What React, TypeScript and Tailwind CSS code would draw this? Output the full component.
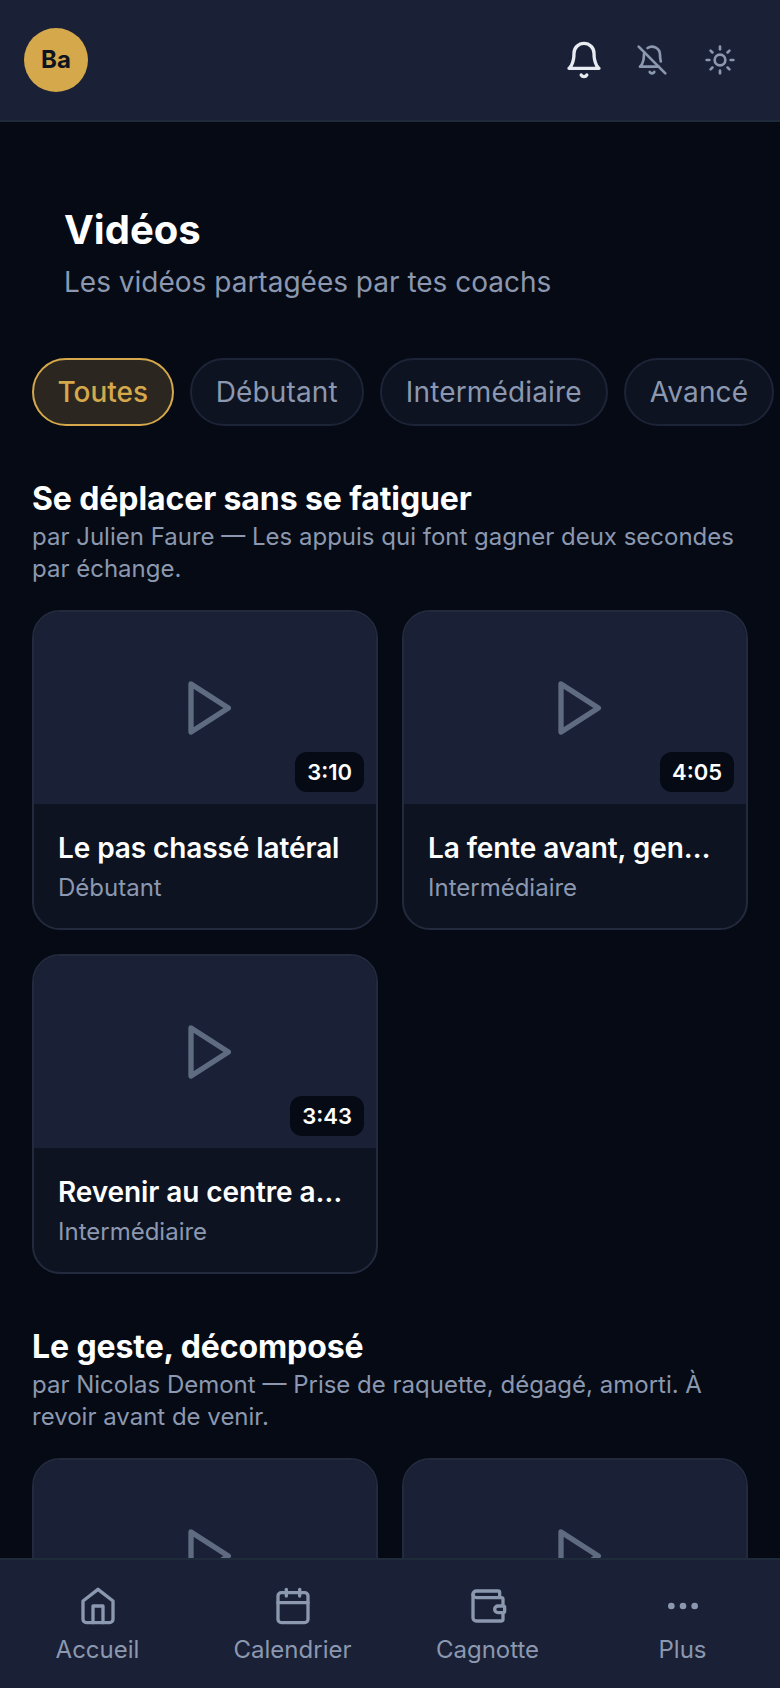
import { Calendar, Ellipsis, Sun, Wallet } from 'lucide-react';

const filters = ['Toutes', 'Débutant', 'Intermédiaire', 'Avancé'];

const sections = [
  {
    title: 'Se déplacer sans se fatiguer',
    text: 'par Julien Faure — Les appuis qui font gagner deux secondes par échange.',
    videos: [
      { title: 'Le pas chassé latéral', level: 'Débutant', time: '3:10' },
      { title: 'La fente avant, genou protégé', level: 'Intermédiaire', time: '4:05' },
      { title: 'Revenir au centre après le coup', level: 'Intermédiaire', time: '3:43' },
    ],
  },
  {
    title: 'Le geste, décomposé',
    text: 'par Nicolas Demont — Prise de raquette, dégagé, amorti. À revoir avant de venir.',
    videos: [
      { title: 'La prise de raquette', level: 'Débutant', time: '2:48' },
      { title: 'Le dégagé de fond de court', level: 'Intermédiaire', time: '5:12' },
    ],
  },
];

function HouseIcon({ size, className }: { size: number; className?: string }) {
  return (
    <svg width={size} height={size} viewBox="0 0 24 24" fill="none" stroke="currentColor" strokeWidth="2" strokeLinecap="round" strokeLinejoin="round" className={className}>
      <path d="m3 9 9-7 9 7v11a2 2 0 0 1-2 2H5a2 2 0 0 1-2-2z" />
      <polyline points="9 22 9 12 15 12 15 22" />
    </svg>
  );
}

function BellIcon({ size, className }: { size: number; className?: string }) {
  return (
    <svg width={size} height={size} viewBox="0 0 24 24" fill="none" stroke="currentColor" strokeWidth="2" strokeLinecap="round" strokeLinejoin="round" className={className}>
      <path d="M6 8a6 6 0 0 1 12 0c0 7 3 9 3 9H3s3-2 3-9" />
      <path d="M10.3 21a1.94 1.94 0 0 0 3.4 0" />
    </svg>
  );
}

function BellOffIcon({ size, className }: { size: number; className?: string }) {
  return (
    <svg width={size} height={size} viewBox="0 0 24 24" fill="none" stroke="currentColor" strokeWidth="2" strokeLinecap="round" strokeLinejoin="round" className={className}>
      <path d="M8.7 3A6 6 0 0 1 18 8a21.3 21.3 0 0 0 .6 5" />
      <path d="M17 17H3s3-2 3-9a4.67 4.67 0 0 1 .3-1.7" />
      <path d="M10.3 21a1.94 1.94 0 0 0 3.4 0" />
      <path d="m2 2 20 20" />
    </svg>
  );
}

const navItems = [
  { label: 'Accueil', icon: HouseIcon },
  { label: 'Calendrier', icon: Calendar },
  { label: 'Cagnotte', icon: Wallet },
  { label: 'Plus', icon: Ellipsis },
];

function VideoCard({ title, level, time }: { title: string; level: string; time: string }) {
  return (
    <div className="overflow-hidden rounded-[28px] border-2 border-[#232a3e] bg-[#0d1320]">
      <div className="relative flex h-[192px] items-center justify-center bg-[#1a2035]">
        <svg width="64" height="64" viewBox="0 0 24 24" fill="none" stroke="#5f6b80" strokeWidth="2" strokeLinejoin="round" className="ml-[4px]">
          <polygon points="6 3 20 12 6 21 6 3" />
        </svg>
        <span className="absolute right-[12px] bottom-[12px] rounded-[12px] bg-[#050a14] px-[12px] py-[4px] text-[22px] leading-[32px] font-semibold text-white">
          {time}
        </span>
      </div>
      <div className="px-[24px] pt-[24px] pb-[24px]">
        <p className="truncate text-[28px] leading-[40px] font-semibold tracking-[-0.1px] text-white">{title}</p>
        <p className="mt-[4px] text-[24px] leading-[32px] text-[#8b98b0]">{level}</p>
      </div>
    </div>
  );
}

export default function App() {
  return (
    <div className="flex h-[1688px] w-[780px] flex-col overflow-hidden bg-[#050a14] font-['Inter',sans-serif]">
      <header className="flex h-[122px] shrink-0 items-center justify-between border-b-2 border-[#1f2a3a] bg-[#1a2035] pr-[26px] pl-[24px]">
        <div className="flex h-[64px] w-[64px] items-center justify-center rounded-full bg-[#d4a84b] text-[24px] font-bold text-[#0d1320]">
          Ba
        </div>
        <div className="flex items-center">
          <span className="flex w-[68px] justify-center text-[#e8ecf2]">
            <BellIcon size={40} />
          </span>
          <span className="flex w-[68px] justify-center text-[#8b98b0]">
            <BellOffIcon size={32} />
          </span>
          <span className="flex w-[68px] justify-center text-[#8b98b0]">
            <Sun size={32} />
          </span>
        </div>
      </header>

      <main className="min-h-0 flex-1 overflow-hidden px-[32px]">
        <div className="px-[32px] pt-[80px] pb-[54px]">
          <h1 className="mb-[2px] text-[40px] leading-[56px] font-bold text-white">Vidéos</h1>
          <p className="text-[28px] leading-[44px] text-[#8b98b0]">Les vidéos partagées par tes coachs</p>
        </div>

        <div className="mb-[51px] flex gap-[16px]">
          {filters.map((f, i) => (
            <span
              key={f}
              className={
                i === 0
                  ? 'shrink-0 rounded-full border-2 border-[#d4a84b] bg-[#2b2620] px-[23.5px] py-[14px] text-[28px] leading-[36px] font-medium text-[#d4a84b]'
                  : 'shrink-0 rounded-full border-2 border-[#1e2438] bg-[#0d1320] px-[24px] py-[14px] text-[28px] leading-[36px] tracking-[0.15px] text-[#8b98b0]'
              }
            >
              {f}
            </span>
          ))}
        </div>

        <div className="flex flex-col gap-[51px]">
          {sections.map((s) => (
            <section key={s.title}>
              <h2 className="text-[32px] leading-[44px] font-bold tracking-[-0.1px] text-white">{s.title}</h2>
              <p className="mb-[25px] text-[24px] leading-[32px] text-[#8b98b0]">{s.text}</p>
              <div className="grid grid-cols-2 gap-[24px]">
                {s.videos.map((v) => (
                  <VideoCard key={v.title} {...v} />
                ))}
              </div>
            </section>
          ))}
        </div>
      </main>

      <nav className="grid h-[130px] shrink-0 grid-cols-4 border-t-2 border-[#1f2a3a] bg-[#1a2035]">
        {navItems.map(({ label, icon: Icon }) => (
          <div key={label} className="flex flex-col items-center pt-[26px]">
            <Icon size={40} className="text-[#8b98b0]" />
            <span className="mt-[8px] text-[24px] leading-[32px] text-[#8b98b0]">{label}</span>
          </div>
        ))}
      </nav>
    </div>
  );
}
